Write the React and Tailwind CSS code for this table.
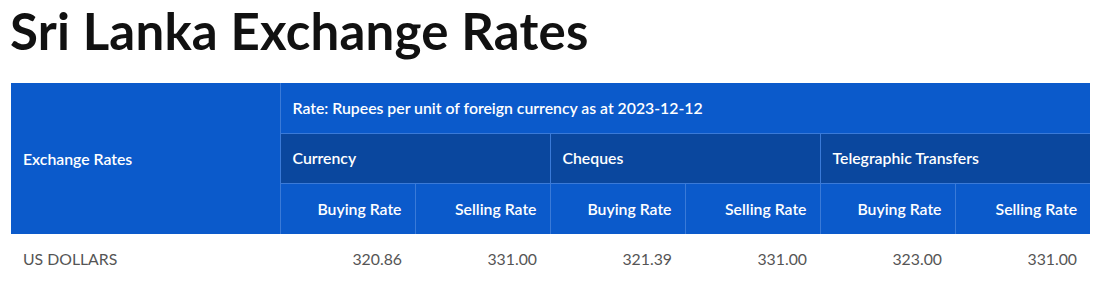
import React from 'react';

const rates = [
  { name: 'US DOLLARS', values: ['320.86', '331.00', '321.39', '331.00', '323.00', '331.00'] },
];

const groups = ['Currency', 'Cheques', 'Telegraphic Transfers'];

function App() {
  return (
    <div className="bg-white px-[11px] text-[15.8px]" style={{ fontFamily: 'Lato, "Noto Sans", sans-serif' }}>
      <h1 className="text-[51px] font-bold leading-[62px] text-[#111] tracking-[0.2px] ml-[-1px]">Sri Lanka Exchange Rates</h1>
      <table className="mt-[21px] w-[1079px] border-collapse table-fixed">
        <colgroup>
          <col className="w-[269px]" />
          {[0, 1, 2, 3, 4, 5].map((i) => (
            <col key={i} className="w-[135px]" />
          ))}
        </colgroup>
        <thead className="text-white font-semibold">
          <tr className="h-[50px] bg-[#0b5acb]">
            <th rowSpan={3} className="text-left font-semibold px-3 border-r border-[#3a7ad8]">Exchange Rates</th>
            <th colSpan={6} className="text-left font-semibold px-3 border-b border-[#3a7ad8]">
              Rate: Rupees per unit of foreign currency as at 2023-12-12
            </th>
          </tr>
          <tr className="h-[50px] bg-[#0a479e]">
            {groups.map((g, i) => (
              <th key={g} colSpan={2} className={'text-left font-semibold px-3 border-[#3a7ad8] ' + (i < 2 ? 'border-r' : '')}>
                {g}
              </th>
            ))}
          </tr>
          <tr className="h-[51px] bg-[#0b5acb]">
            {[0, 1, 2].map((i) => (
              <React.Fragment key={i}>
                <th className="text-right font-semibold px-[13px] border-t border-r border-[#3a7ad8]">Buying Rate</th>
                <th className={'text-right font-semibold px-[13px] border-t border-[#3a7ad8] ' + (i < 2 ? 'border-r' : '')}>Selling Rate</th>
              </React.Fragment>
            ))}
          </tr>
        </thead>
        <tbody className="text-[#555]">
          {rates.map((r) => (
            <tr key={r.name} className="h-[50px]">
              <td className="px-3">{r.name}</td>
              {r.values.map((v, i) => (
                <td key={i} className="text-right px-[13px]">{v}</td>
              ))}
            </tr>
          ))}
        </tbody>
      </table>
    </div>
  );
}

export default App;
